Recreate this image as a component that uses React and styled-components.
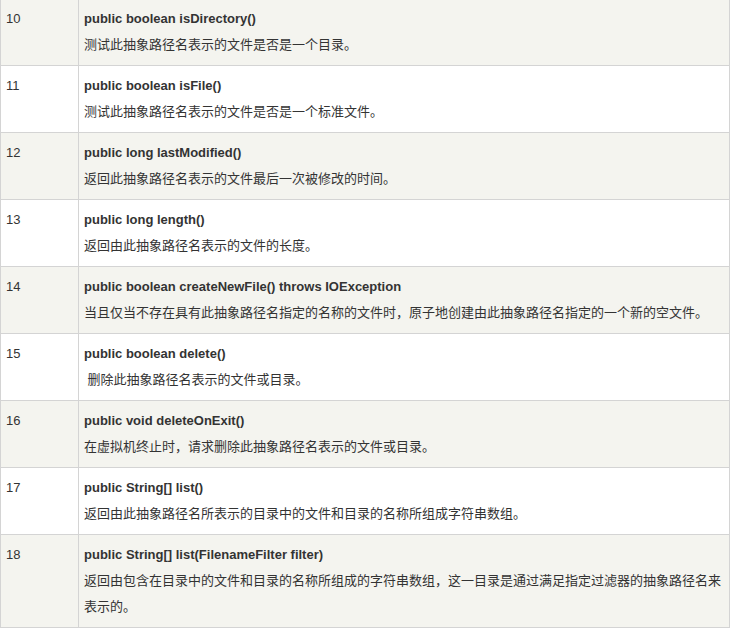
import React from "react";
import styled, { createGlobalStyle } from "styled-components";

const GlobalStyle = createGlobalStyle`
  html, body {
    margin: 0;
    padding: 0;
    background: #fff;
  }
  body {
    font-family: "Liberation Sans", "Noto Sans CJK SC", Arial, sans-serif;
    font-size: 13px;
    color: #333;
    overflow: hidden;
  }
`;

const Table = styled.table`
  width: 730px;
  margin-top: -2px;
  border-collapse: collapse;
  table-layout: fixed;
`;

const Row = styled.tr`
  background: ${(p) => (p.$shaded ? "#f4f4ef" : "#ffffff")};
`;

const Cell = styled.td`
  border: 1px solid #d4d4d4;
  padding: 7px 5px;
  line-height: 26px;
  vertical-align: top;
  color: #333;
  width: ${(p) => p.$width || "auto"};
`;

const Signature = styled.b`
  display: block;
  font-weight: bold;
  color: #333;
`;

const Desc = styled.div`
  color: #333;
`;

// java.io.File methods, 10 - 18
const methods = [
  [10, "public boolean isDirectory()", "测试此抽象路径名表示的文件是否是一个目录。"],
  [11, "public boolean isFile()", "测试此抽象路径名表示的文件是否是一个标准文件。"],
  [12, "public long lastModified()", "返回此抽象路径名表示的文件最后一次被修改的时间。"],
  [13, "public long length()", "返回由此抽象路径名表示的文件的长度。"],
  [
    14,
    "public boolean createNewFile() throws IOException",
    "当且仅当不存在具有此抽象路径名指定的名称的文件时，原子地创建由此抽象路径名指定的一个新的空文件。",
  ],
  [15, "public boolean delete()", "\u00a0删除此抽象路径名表示的文件或目录。"],
  [16, "public void deleteOnExit()", "在虚拟机终止时，请求删除此抽象路径名表示的文件或目录。"],
  [17, "public String[] list()", "返回由此抽象路径名所表示的目录中的文件和目录的名称所组成字符串数组。"],
  [
    18,
    "public String[] list(FilenameFilter filter)",
    "返回由包含在目录中的文件和目录的名称所组成的字符串数组，这一目录是通过满足指定过滤器的抽象路径名来表示的。",
  ],
];

export default function App() {
  return (
    <>
      <GlobalStyle />
      <Table>
        <colgroup>
          <col style={{ width: 78 }} />
          <col />
        </colgroup>
        <tbody>
          {methods.map(([num, sig, desc], i) => (
            <Row key={num} $shaded={i % 2 === 0}>
              <Cell>{num}</Cell>
              <Cell>
                <Signature>{sig}</Signature>
                <Desc>{desc}</Desc>
              </Cell>
            </Row>
          ))}
        </tbody>
      </Table>
    </>
  );
}
